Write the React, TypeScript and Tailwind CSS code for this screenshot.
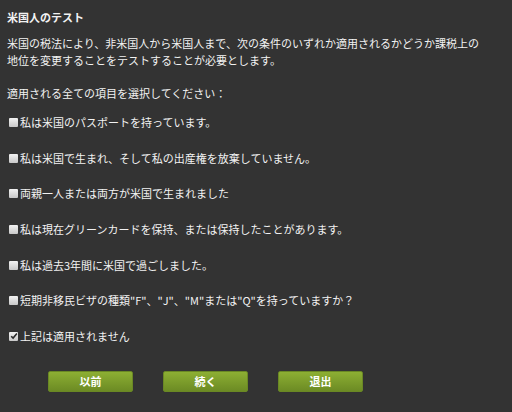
const items = [
	"私は米国のパスポートを持っています。",
	"私は米国で生まれ、そして私の出産権を放棄していません。",
	"両親一人または両方が米国で生まれました",
	"私は現在グリーンカードを保持、または保持したことがあります。",
	"私は過去3年間に米国で過ごしました。",
	"短期非移民ビザの種類\"F\"、\"J\"、\"M\"または\"Q\"を持っていますか？",
	"上記は適用されません",
];

const Box = ({ checked }: { checked: boolean }) => (
	<span className="ml-[2px] mr-[2px] flex h-[9px] w-[9px] shrink-0 items-center justify-center rounded-[1px] bg-gradient-to-b from-[#f2f2f2] to-[#c8c8c8]">
		{checked && (
			<svg width="8" height="8" viewBox="0 0 8 8">
				<path d="M1.2 4.2 L3.1 6.1 L6.9 1.6" fill="none" stroke="#2a2a2a" strokeWidth="1.6" />
			</svg>
		)}
	</span>
);

const Button = ({ label }: { label: string }) => (
	<button className="h-[21px] w-[85px] rounded-[2px] border border-[#6a8824] bg-gradient-to-b from-[#8daf33] to-[#6c8b24] text-[11px] font-bold leading-[19px] text-white">
		{label}
	</button>
);

export default function App() {
	return (
		<div
			className="h-[412px] w-[512px] bg-[#333333] pl-[7px] pt-[9px] text-[11px] leading-[17px] text-[#f2f2f2]"
			style={{ fontFamily: '"Noto Sans CJK JP", "Noto Sans", sans-serif' }}
		>
			<div className="font-bold">米国人のテスト</div>
			<p className="mt-[9px] w-[478px]">
				米国の税法により、非米国人から米国人まで、次の条件のいずれか適用されるかどうか課税上の地位を変更することをテストすることが必要とします。
			</p>
			<p className="mt-[16px]">適用される全ての項目を選択してください：</p>
			<div className="mt-[12px] flex flex-col gap-[18.67px]">
				{items.map((t, i) => (
					<label key={i} className="flex h-[17px] items-center">
						<Box checked={i === items.length - 1} />
						<span>{t}</span>
					</label>
				))}
			</div>
			<div className="mt-[26px] flex gap-[30px] pl-[41px]">
				<Button label="以前" />
				<Button label="続く" />
				<Button label="退出" />
			</div>
		</div>
	);
}
